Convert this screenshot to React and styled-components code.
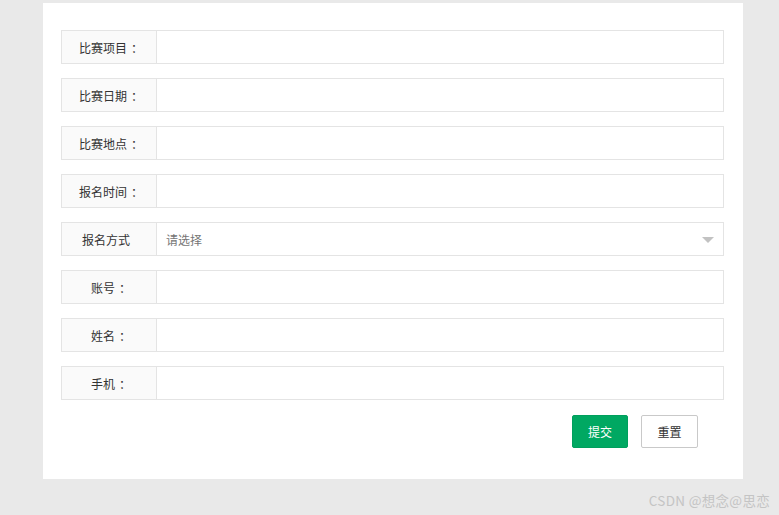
import React from 'react'
import styled, { createGlobalStyle } from 'styled-components'

const Global = createGlobalStyle`
  html, body { margin: 0; padding: 0; }
  body {
    background: #e9e9e9;
    font-family: "Noto Sans CJK SC", "Liberation Sans", sans-serif;
    width: 779px;
    height: 515px;
    overflow: hidden;
  }
`

const Page = styled.div`
  padding: 3px 0 0 43px;
  height: 512px;
  position: relative;
`

const Panel = styled.form`
  width: 700px;
  height: 476px;
  background: #fff;
  box-sizing: border-box;
  padding: 27px 19px 0 18px;
  display: flex;
  flex-direction: column;
  gap: 14px;
`

const Row = styled.div`
  display: flex;
  height: 34px;
  box-sizing: border-box;
  border: 1px solid #e4e4e4;
  width: 663px;
`

const Label = styled.label`
  width: 95px;
  flex-shrink: 0;
  background: #fafafa;
  border-right: 1px solid #e4e4e4;
  display: flex;
  align-items: center;
  justify-content: center;
  font-size: 12px;
  color: #333;
  padding-left: ${p => (p.$colon ? '4px' : '0')};
  padding-right: ${p => (p.$colon ? '0' : '6px')};
  box-sizing: border-box;
`

const Colon = styled.span`
  margin-left: 4px;
`

const Input = styled.input`
  flex: 1;
  border: none;
  outline: none;
  background: #fff;
  padding: 0 10px;
  font-size: 12px;
`

const Select = styled.div`
  flex: 1;
  display: flex;
  align-items: center;
  justify-content: space-between;
  padding: 0 9px 0 9px;
  font-size: 12px;
  color: #757575;
`

const Caret = styled.span`
  width: 0;
  height: 0;
  border-left: 6px solid transparent;
  border-right: 6px solid transparent;
  border-top: 6px solid #c2c2c2;
  margin-top: 2px;
`

const Actions = styled.div`
  display: flex;
  justify-content: flex-end;
  gap: 13px;
  padding-right: 26px;
  margin-top: 1px;
`

const Button = styled.button`
  height: 33px;
  width: ${p => (p.$primary ? '56px' : '57px')};
  box-sizing: border-box;
  border: 1px solid ${p => (p.$primary ? '#009f5d' : '#c9c9c9')};
  background: ${p => (p.$primary ? '#00a862' : '#fff')};
  color: ${p => (p.$primary ? '#fff' : '#333')};
  border-radius: 2px;
  font-size: 12px;
  font-family: inherit;
  cursor: pointer;
`

const Watermark = styled.div`
  position: absolute;
  right: 9px;
  bottom: 5px;
  font-size: 13.5px;
  color: #c4c4c4;
  letter-spacing: 0.3px;
`

const fields = ['比赛项目', '比赛日期', '比赛地点', '报名时间']
const fields2 = ['账号', '姓名', '手机']

export default function App() {
  return (
    <>
      <Global />
      <Page>
        <Panel onSubmit={e => e.preventDefault()}>
          {fields.map(f => (
            <Row key={f}>
              <Label $colon>{f}<Colon>：</Colon></Label>
              <Input />
            </Row>
          ))}
          <Row>
            <Label>报名方式</Label>
            <Select>
              <span>请选择</span>
              <Caret />
            </Select>
          </Row>
          {fields2.map(f => (
            <Row key={f}>
              <Label $colon>{f}<Colon>：</Colon></Label>
              <Input />
            </Row>
          ))}
          <Actions>
            <Button $primary type="submit">提交</Button>
            <Button type="reset">重置</Button>
          </Actions>
        </Panel>
        <Watermark>CSDN @想念@思恋</Watermark>
      </Page>
    </>
  )
}
